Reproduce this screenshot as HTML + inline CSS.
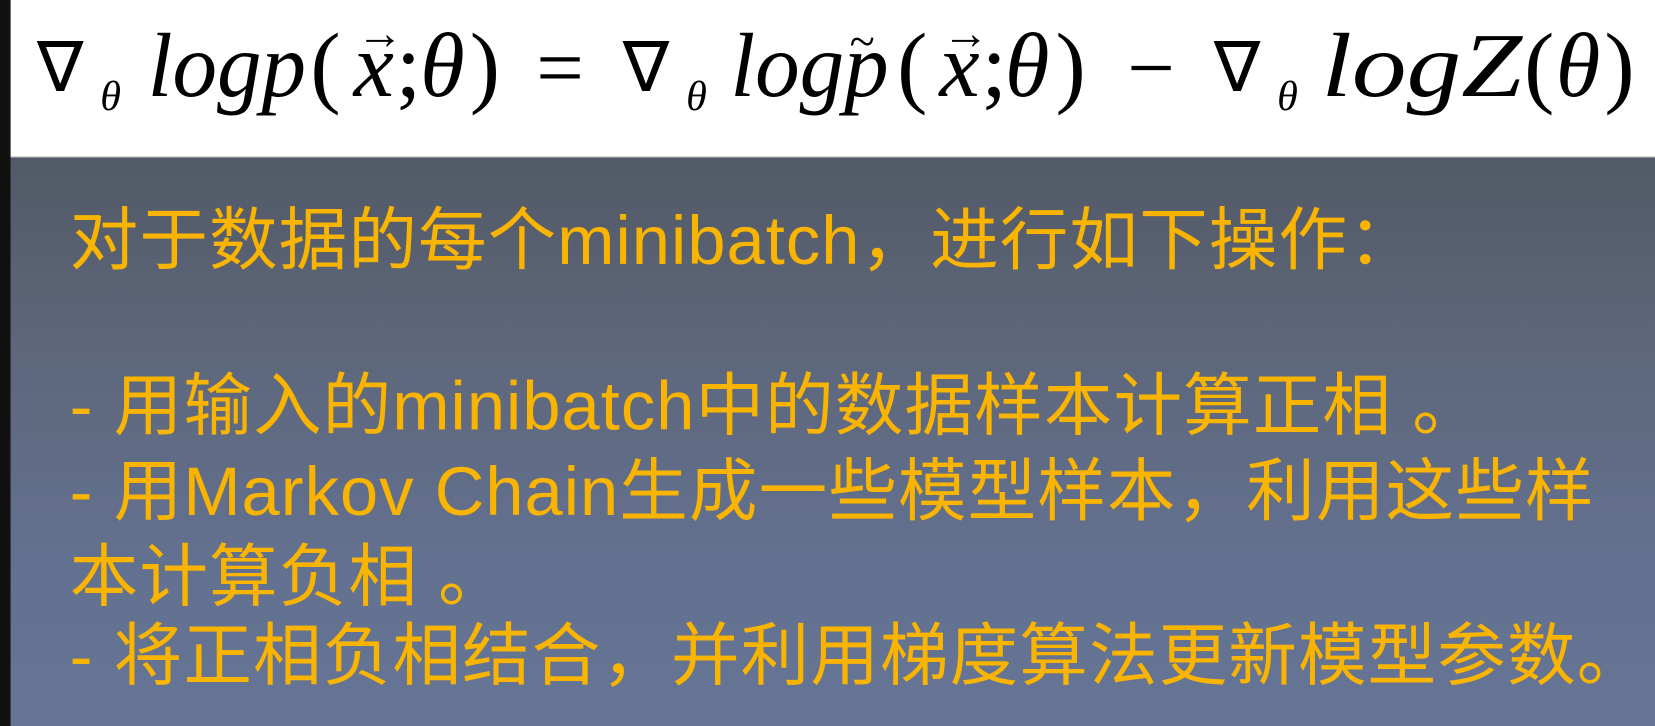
<!DOCTYPE html>
<html><head><meta charset="utf-8"><style>
html,body{margin:0;padding:0}
body{width:1655px;height:726px;overflow:hidden;position:relative;background:linear-gradient(#525966 155px,#5d6679 330px,#637190 560px,#667595 726px);font-family:"Liberation Sans","Noto Sans CJK SC",sans-serif}
.wrap{position:absolute;left:0;top:0;width:1568px;height:688px;transform:scale(1.0555);transform-origin:0 0}
.strip{position:absolute;left:0;top:0;width:10px;height:688px;background:#111}
.top{position:absolute;left:10px;top:0;width:1558px;height:148px;background:#fff;border-bottom:1px solid #ccc}
.t{position:absolute;left:66px;color:#f9b400;font-size:65px;letter-spacing:1px;white-space:nowrap;line-height:1}
svg{position:absolute;left:0;top:-4px}
</style></head><body>
<div class="wrap">
<div class="top"></div>
<div class="strip"></div>
<svg width="1568" height="152" font-family="'Liberation Serif',serif" font-style="italic" fill="#000">
<text x="35" y="90" font-size="66" font-style="normal">∇</text>
<text x="95" y="108" font-size="40">θ</text>
<text x="140" y="95" font-size="86" textLength="150" lengthAdjust="spacingAndGlyphs">logp</text>
<text x="294" y="95" font-size="86" font-style="normal">(</text>
<text x="335" y="95" font-size="86">x</text>
<text x="338" y="50" font-size="44" font-style="normal">→</text>
<text x="375" y="95" font-size="86" font-style="normal">;</text>
<text x="398" y="95" font-size="86">θ</text>
<text x="445" y="95" font-size="86" font-style="normal">)</text>
<text x="508" y="95" font-size="80" font-style="normal">=</text>
<text x="590" y="90" font-size="66" font-style="normal">∇</text>
<text x="650" y="108" font-size="40">θ</text>
<text x="692" y="95" font-size="86" textLength="150" lengthAdjust="spacingAndGlyphs">logp</text>
<text x="805" y="58" font-size="44" font-style="normal">~</text>
<text x="850" y="95" font-size="86" font-style="normal">(</text>
<text x="890" y="95" font-size="86">x</text>
<text x="893" y="50" font-size="44" font-style="normal">→</text>
<text x="930" y="95" font-size="86" font-style="normal">;</text>
<text x="952" y="95" font-size="86">θ</text>
<text x="1000" y="95" font-size="86" font-style="normal">)</text>
<text x="1068" y="95" font-size="80" font-style="normal">−</text>
<text x="1150" y="90" font-size="66" font-style="normal">∇</text>
<text x="1210" y="108" font-size="40">θ</text>
<text x="1252" y="95" font-size="86" textLength="190" lengthAdjust="spacingAndGlyphs">logZ</text>
<text x="1444" y="95" font-size="86" font-style="normal">(</text>
<text x="1474" y="95" font-size="86">θ</text>
<text x="1520" y="95" font-size="86" font-style="normal">)</text>
</svg>
<div class="t" style="top:195px">对于数据的每个minibatch，进行如下操作：</div>
<div class="t" style="top:352px">- 用输入的minibatch中的数据样本计算正相 。</div>
<div class="t" style="top:433px">- 用Markov Chain生成一些模型样本，利用这些样</div>
<div class="t" style="top:514px">本计算负相 。</div>
<div class="t" style="top:589px">- 将正相负相结合，并利用梯度算法更新模型参数。</div>
</div>
</body></html>
